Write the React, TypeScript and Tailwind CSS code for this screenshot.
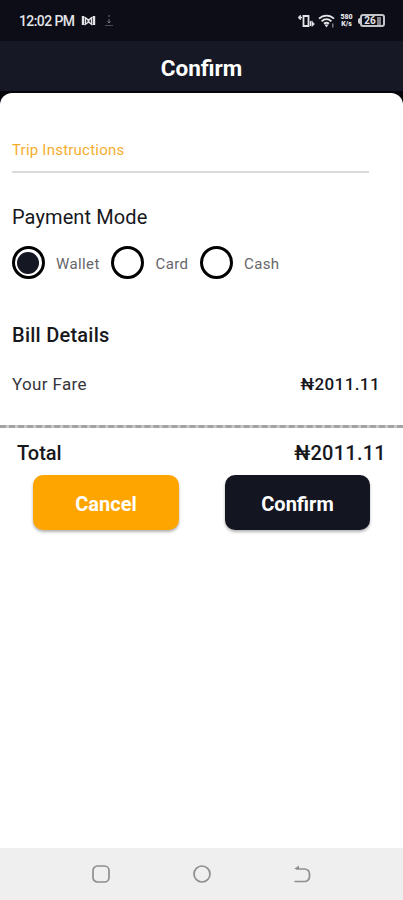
import { useState } from "react";

const modes = [
  { name: "Wallet", width: "w-[99.5px]" },
  { name: "Card", width: "w-[88.5px]" },
  { name: "Cash", width: "w-[90px]" },
];

function StatusBar() {
  return (
    <div className="flex h-[41px] items-center justify-between bg-[#0c0d16] pl-[19px] pr-[18px] text-[#e4e4e8]">
      <div className="flex items-center">
        <span className="w-[62px] whitespace-nowrap text-[14px] font-medium leading-[20px] tracking-[-0.6px]">
          12:02 PM
        </span>
        <svg width="15" height="12" viewBox="0 0 15 12" fill="none" stroke="currentColor">
          <path d="M2 1v9M13 1v9" strokeWidth="2.4" />
          <path d="M3.5 2l4 3 4-3M3.5 10l4-3 4 3M4.5 3v6M10.5 3v6" strokeWidth="1.4" />
          <path d="M7.5 5v2" strokeWidth="2" />
        </svg>
        <svg className="ml-[8px]" width="10" height="14" viewBox="0 0 10 14" fill="none" stroke="#777781">
          <path d="M5 1v2M5 5v4M3.5 7.5L5 9l1.5-1.5" />
          <path d="M1 11.5h8" stroke="#4e4e58" />
        </svg>
      </div>
      <div className="flex items-center">
        <svg width="18" height="14" viewBox="0 0 18 14" fill="none" stroke="currentColor">
          <path d="M5.5 2h5v10h-5z" strokeWidth="1.8" />
          <path d="M0 3.5L2.5 1v5zM14 6.5v5M16.5 10L14 12.5V7.5z" fill="currentColor" strokeWidth="0.6" />
          <path d="M2 3.5h2M12.5 7v5" strokeWidth="1.4" />
        </svg>
        <svg className="ml-[2px]" width="17" height="14" viewBox="0 0 17 14" fill="none" stroke="currentColor">
          <path d="M1 4.7c4.2-4.2 10.8-4.2 15 0M3.6 7.3c2.9-2.8 6.9-2.8 9.8 0M6 9.8c1.6-1.4 3.4-1.4 5 0" strokeWidth="1.8" />
          <path d="M6.5 10.5h4l-2 3z" fill="currentColor" stroke="none" />
          <path d="M14.8 9.5v4" strokeWidth="1.3" stroke="#8b8b94" />
        </svg>
        <div className="ml-[4px] flex w-[15px] flex-col items-center text-[7px] font-black leading-[7px]">
          <span>580</span>
          <span>K/s</span>
        </div>
        <div className="ml-[4px] flex items-center">
          <span className="h-[6px] w-[2px] rounded-l-sm bg-[#d0d0d4]" />
          <span className="flex h-[13px] w-[25px] items-center justify-center rounded-[3px] border-2 border-[#c4c4c9]">
            <span className="text-[10px] font-bold leading-[9px]">26</span>
            <span className="ml-px h-[8px] w-[4px] bg-[#85858d]" />
          </span>
        </div>
      </div>
    </div>
  );
}

function NavBar() {
  return (
    <div className="flex h-[52px] items-center justify-between bg-[#efefef] pl-[91px] pr-[91px] text-[#8e8e8e]">
      <svg width="20" height="20" viewBox="0 0 20 20" fill="none" stroke="currentColor" strokeWidth="1.7">
        <rect x="2" y="2" width="16" height="16" rx="4.5" />
      </svg>
      <svg width="20" height="20" viewBox="0 0 20 20" fill="none" stroke="currentColor" strokeWidth="1.7">
        <circle cx="10" cy="10" r="8" />
      </svg>
      <svg width="20" height="20" viewBox="0 0 20 20" fill="none" stroke="currentColor" strokeWidth="1.7">
        <path d="M4 5h8.5a5 5 0 0 1 5 5v2.5a5 5 0 0 1-5 5H2.5" />
        <path d="M2 5l5-3.5V5z" fill="currentColor" stroke="none" />
      </svg>
    </div>
  );
}

export default function App() {
  const [mode, setMode] = useState("Wallet");

  return (
    <div className="flex h-[900px] w-full flex-col bg-[#05060c] font-['Roboto','Noto_Sans',sans-serif] text-[#17171c]">
      <StatusBar />
      <header className="flex h-[52px] items-center justify-center border-b-2 border-[#05060c] bg-[#161925] pt-[3px]">
        <h1 className="text-[22.5px] font-bold leading-[28px] text-white">Confirm</h1>
      </header>
      <main className="flex-1 rounded-t-[12px] bg-white">
        <div className="ml-[12px] mr-[34px] border-b-2 border-[#dadada] pt-[46px] pb-[10px]">
          <p className="text-[15px] leading-[22px] tracking-[0.22px] text-[#f5ad2e]">Trip Instructions</p>
        </div>
        <h2 className="ml-[12px] mt-[31px] text-[20px] leading-[26px] tracking-[0.1px]">Payment Mode</h2>
        <div className="ml-[11.5px] mt-[16px] flex">
          {modes.map((m) => (
            <button
              key={m.name}
              onClick={() => setMode(m.name)}
              className={`flex h-[33px] items-center ${m.width}`}
            >
              <span className="flex size-[33px] shrink-0 items-center justify-center rounded-full border-[3px] border-black">
                {mode === m.name && <span className="size-[22px] rounded-full bg-[#151723]" />}
              </span>
              <span className="ml-[11.5px] mt-[2px] text-[15px] leading-[20px] tracking-[0.4px] text-[#66666a]">
                {m.name}
              </span>
            </button>
          ))}
        </div>
        <h2 className="ml-[12px] mt-[43px] text-[20px] font-medium leading-[26px] tracking-[0.25px]">Bill Details</h2>
        <div className="ml-[12px] mr-[23px] mt-[24px] flex justify-between text-[17px] leading-[24px]">
          <span className="tracking-[0.35px] text-[#35353a]">Your Fare</span>
          <span className="font-medium tracking-[0.4px]">₦2011.11</span>
        </div>
        <div className="mt-[29px] border-t-[3px] border-dashed border-[#a3a3a3] bg-[#c9c9c9]" />
        <div className="ml-[17px] mr-[17px] mt-[12px] flex justify-between text-[20px] font-medium leading-[26px]">
          <span>Total</span>
          <span className="tracking-[0.25px]">₦2011.11</span>
        </div>
        <div className="ml-[33px] mr-[33px] mt-[9px] flex justify-between text-[20px] font-bold text-white">
          <button className="h-[55px] w-[146px] rounded-[10px] bg-[#ffa500] pt-[2px] shadow-[0_2px_3px_rgba(0,0,0,0.3)]">
            Cancel
          </button>
          <button className="h-[55px] w-[145px] rounded-[10px] bg-[#131521] pt-[2px] shadow-[0_2px_3px_rgba(0,0,0,0.3)]">
            Confirm
          </button>
        </div>
      </main>
      <NavBar />
    </div>
  );
}
